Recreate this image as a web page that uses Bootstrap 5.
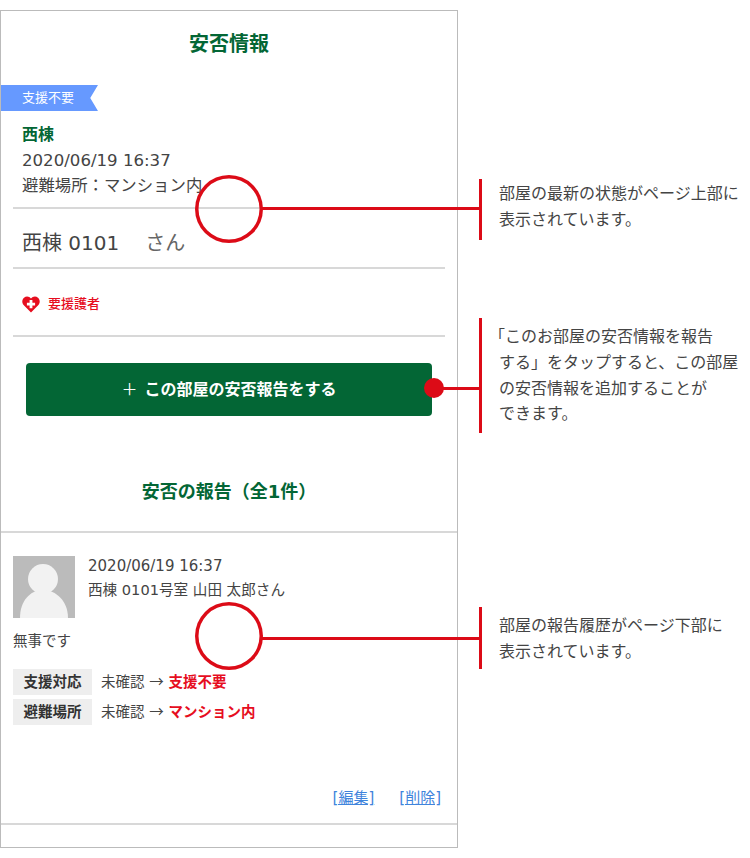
<!DOCTYPE html>
<html lang="ja">
  <head>
    <title>安否情報</title>
    <meta charset="utf-8" />
    <meta name="viewport" content="width=device-width, initial-scale=1" />
    <link href="https://cdn.jsdelivr.net/npm/bootstrap@5.3.2/dist/css/bootstrap.min.css" rel="stylesheet" />
    <script src="https://cdn.jsdelivr.net/npm/bootstrap@5.3.2/dist/js/bootstrap.bundle.min.js"></script>
    <style>
      body {
        background: #fff;
        color: #444;
        font-family: "DejaVu Sans", "Noto Sans CJK JP", sans-serif;
        font-size: 14.5px;
      }
      .canvas { position: relative; width: 750px; height: 858px; padding-top: 10px; overflow: hidden; }
      .phone { width: 458px; height: 838px; border: 1px solid #bbb; }
      .page-title { height: 74px; padding-top: 20px; margin: 0; font-size: 20px; font-weight: 700; line-height: 26px; color: #036635; }
      .status-tag {
        width: 97px; height: 26px; padding-left: 21px; background: #6699ff; color: #fff; font-size: 13px; line-height: 25px;
        clip-path: polygon(0 0, 100% 0, 92% 50%, 100% 100%, 0 100%);
      }
      .latest { padding: 11px 0 0 21px; height: 96px; }
      .latest div { line-height: 25.5px; font-size: 16.4px; }
      .latest .building { color: #036635; font-weight: 700; font-size: 16px; }
      .latest .latest-when { font-size: 16.6px; }
      .rule-in { margin: 0 12px; border-top: 2px solid #d8d8d8; }
      .room { height: 58px; padding: 16px 0 0 21px; font-size: 20px; line-height: 36px; }
      .room .san { margin-left: 26px; color: #666; }
      .care { height: 66px; padding: 4px 0 0 21px; color: #e60e1f; font-size: 13px; font-weight: 500; }
      .report-btn {
        width: 406px; height: 53px; margin: 26px 0 0 25px; background: #036635; border: 0; border-radius: 4px;
        color: #fff; font-size: 16px; font-weight: 700;
      }
      .report-btn:hover { background: #036635; color: #fff; }
      .plus { font-weight: 400; font-size: 16px; margin-right: 7px; }
      .sub-title { height: 117px; padding-top: 63px; margin: 0; font-size: 18px; font-weight: 700; line-height: 26px; color: #036635; border-bottom: 2px solid #d8d8d8; }
      .entry { height: 292px; padding: 23px 12px 0; position: relative; border-bottom: 2px solid #d8d8d8; }
      .entry-head { font-size: 14.6px; line-height: 24px; }
      .entry-when { font-size: 15px; margin-top: -2px; }
      .avatar { width: 62px; height: 62px; display: block; margin-right: 5px; }
      .entry-msg { margin-top: 10px; line-height: 26px; }
      .field-list { margin-top: 15px; font-family: "Noto Sans CJK JP", sans-serif; word-spacing: 1.5px; }
      .field-name { width: 79px; height: 26px; margin-right: 9px; background: #eee; color: #333; font-weight: 700; line-height: 24px; text-align: center; }
      .field-row { margin-bottom: 4px; line-height: 24px; }
      .new-value { color: #e60e1f; font-weight: 700; }
      .entry-links { position: absolute; right: 16px; bottom: 13px; font-size: 15px; line-height: 24px; }
      .entry-links a { color: #3f84dc; margin-left: 25px; }
      /* annotations laid over the screenshot */
      .note-ring { position: absolute; width: 68px; height: 68px; border-radius: 50%; box-shadow: inset 0 0 0 3.5px #dc0b17; }
      .note-line { position: absolute; height: 3px; background: #dc0b17; }
      .note-bar { position: absolute; left: 479px; width: 3px; background: #dc0b17; }
      .note-dot { position: absolute; left: 424px; top: 378px; width: 20px; height: 20px; border-radius: 50%; background: #dc0b17; }
      .note-text { position: absolute; left: 499px; width: 245px; font-size: 16px; line-height: 25.8px; color: #444; font-family: "Noto Sans CJK JP", sans-serif; white-space: nowrap; }
      .note-hang { display: inline-block; margin-left: -10px; }
    </style>
  </head>
  <body class="m-0">
    <div class="canvas">
      <div class="phone">
        <h1 class="page-title text-center">安否情報</h1>
        <div class="status-tag">支援不要</div>
        <div class="latest">
          <div class="building">西棟</div>
          <div class="latest-when">2020/06/19 16:37</div>
          <div>避難場所：マンション内</div>
        </div>
        <div class="rule-in"></div>
        <div class="room">西棟 0101<span class="san">さん</span></div>
        <div class="rule-in"></div>
        <div class="care d-flex align-items-center gap-2">
          <svg width="18" height="17" viewBox="0 0 18 17">
            <path d="M9 16.5 1.6 9C-.4 6.8 0 3.300 2 1.700 4.300-.1 7.400.4 9 2.600 10.600.4 13.700-.1 16 1.700c2 1.600 2.400 5.100.4 7.300Z" fill="#e60e1f" />
            <path d="M7.600 4h2.800v2.700h2.700v2.800h-2.700v2.700H7.600V9.500H4.900V6.700h2.700Z" fill="#fff" />
          </svg>
          <span>要援護者</span>
        </div>
        <div class="rule-in"></div>
        <button class="btn report-btn d-block p-0"><span class="plus">＋</span>この部屋の安否報告をする</button>
        <h2 class="sub-title text-center">安否の報告（全1件）</h2>
        <div class="entry">
          <div class="d-flex gap-2 entry-head">
            <svg class="avatar" viewBox="0 0 62 62">
              <rect width="62" height="62" fill="#bbb" />
              <circle cx="30" cy="23" r="15" fill="#f2f2f2" />
              <path d="M7 62C7 45 17 34 30 34S55 45 55 62Z" fill="#f2f2f2" />
            </svg>
            <div>
              <div class="entry-when">2020/06/19 16:37</div>
              <div>西棟 0101号室 山田 太郎さん</div>
            </div>
          </div>
          <div class="entry-msg">無事です</div>
          <div class="field-list">
            <div class="d-flex field-row">
              <div class="field-name">支援対応</div>
              <div>未確認 → <span class="new-value">支援不要</span></div>
            </div>
            <div class="d-flex field-row">
              <div class="field-name">避難場所</div>
              <div>未確認 → <span class="new-value">マンション内</span></div>
            </div>
          </div>
          <div class="entry-links"><a href="#">[編集]</a><a href="#">[削除]</a></div>
        </div>
      </div>

      <div class="note-ring" style="left: 195px; top: 175px"></div>
      <div class="note-line" style="left: 262px; top: 207px; width: 218px"></div>
      <div class="note-bar" style="top: 179px; height: 61px"></div>
      <div class="note-text" style="top: 180px">部屋の最新の状態がページ上部に<br />表示されています。</div>

      <div class="note-dot"></div>
      <div class="note-line" style="left: 440px; top: 387px; width: 40px"></div>
      <div class="note-bar" style="top: 318px; height: 115px"></div>
      <div class="note-text" style="top: 323px"><span class="note-hang">「このお部屋の安否情報を報告</span><br />する」をタップすると、この部屋<br />の安否情報を追加することが<br />できます。</div>

      <div class="note-ring" style="left: 195px; top: 602px"></div>
      <div class="note-line" style="left: 262px; top: 637px; width: 218px"></div>
      <div class="note-bar" style="top: 607px; height: 62px"></div>
      <div class="note-text" style="top: 612px">部屋の報告履歴がページ下部に<br />表示されています。</div>
    </div>
  </body>
</html>
